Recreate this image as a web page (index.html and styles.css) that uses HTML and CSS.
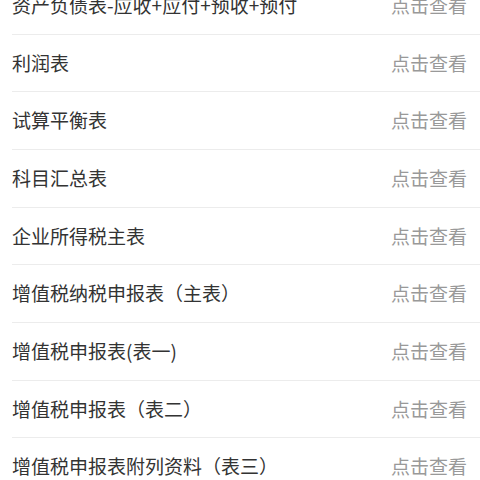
FILE: index.html
```html
<!DOCTYPE html>
<html lang="zh-CN">
<head>
  <meta charset="UTF-8" />
  <meta name="viewport" content="width=device-width, initial-scale=1.0" />
  <title>报表</title>
  <link rel="stylesheet" href="styles.css">
</head>
<body>
  <ul class="report-list">
    <li class="row"><span class="name">资产负债表-应收+应付+预收+预付</span><span class="link">点击查看</span></li>
    <li class="row"><span class="name">利润表</span><span class="link">点击查看</span></li>
    <li class="row"><span class="name">试算平衡表</span><span class="link">点击查看</span></li>
    <li class="row"><span class="name">科目汇总表</span><span class="link">点击查看</span></li>
    <li class="row"><span class="name">企业所得税主表</span><span class="link">点击查看</span></li>
    <li class="row"><span class="name">增值税纳税申报表（主表）</span><span class="link">点击查看</span></li>
    <li class="row"><span class="name">增值税申报表(表一)</span><span class="link">点击查看</span></li>
    <li class="row"><span class="name">增值税申报表（表二）</span><span class="link">点击查看</span></li>
    <li class="row"><span class="name">增值税申报表附列资料（表三）</span><span class="link">点击查看</span></li>
  </ul>
</body>
</html>
```

FILE: styles.css
```css
* {
  box-sizing: border-box;
  padding: 0;
  margin: 0;
  font-family: 'Noto Sans CJK SC', 'Noto Sans', sans-serif;
}

body {
  background-color: #fff;
  overflow: hidden;
  height: 480px;
}

.report-list {
  list-style-type: none;
  margin-top: -23px;
}

.row {
  height: 57.67px;
  margin-left: 12px;
  padding-right: 13px;
  border-bottom: 1px solid #ececec;
  display: flex;
  justify-content: space-between;
  align-items: center;
  font-size: 19px;
  line-height: 1.2;
  text-spacing-trim: space-all;
}

.name {
  color: #333;
}

.link {
  color: #999;
}
```
